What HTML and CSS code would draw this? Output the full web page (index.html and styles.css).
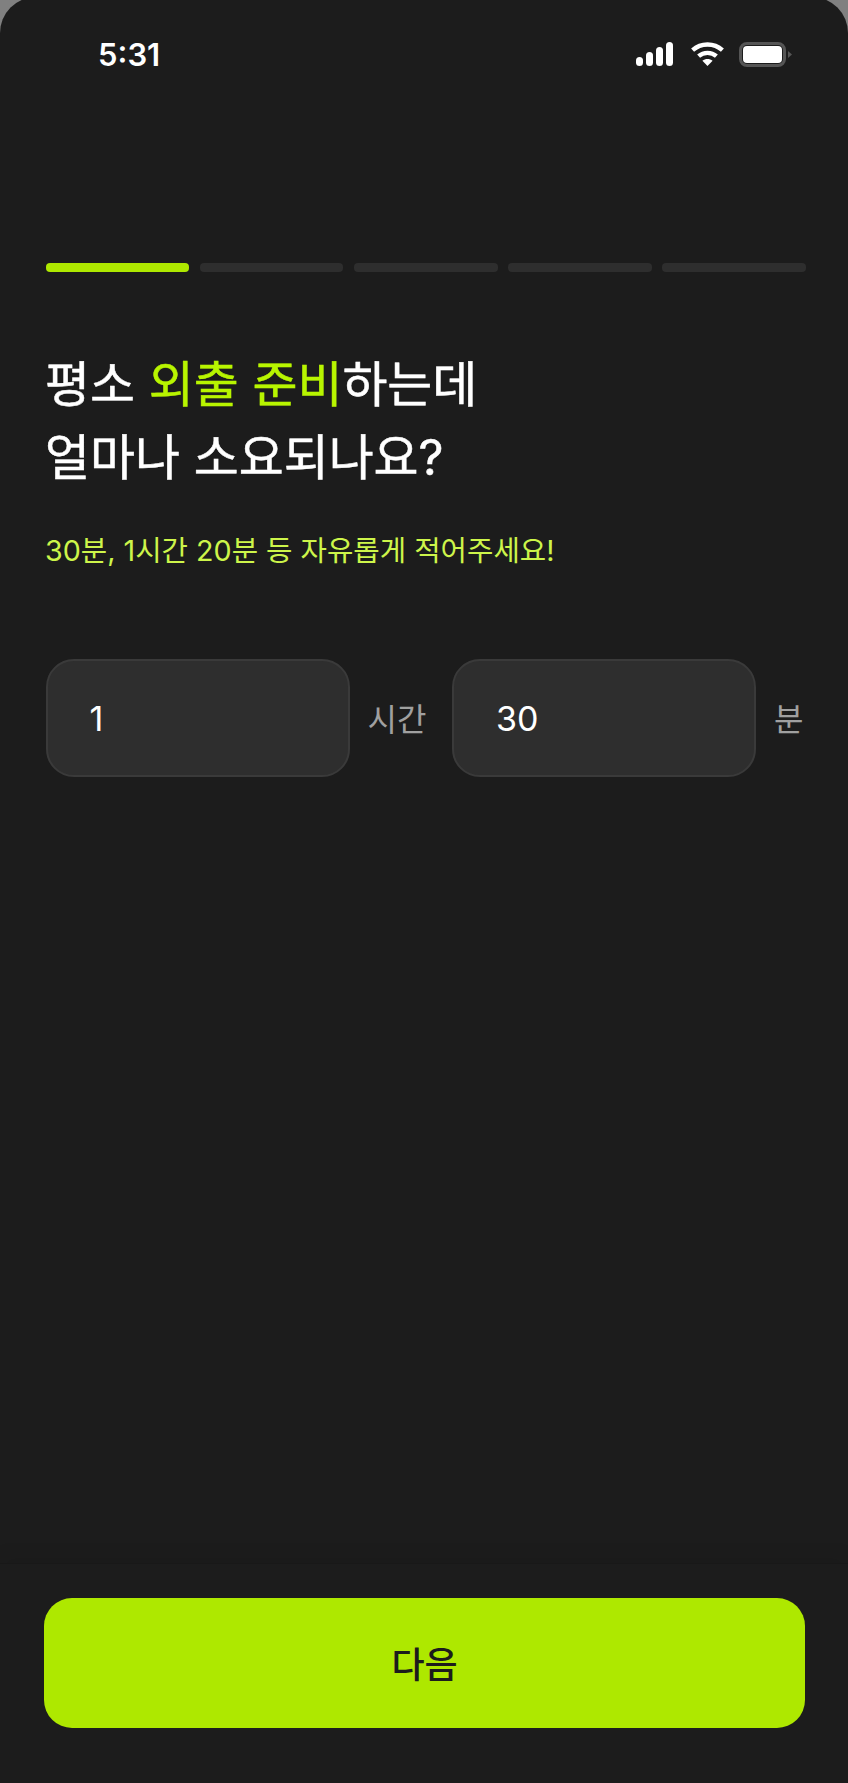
FILE: index.html
```html
<!DOCTYPE html>
<html lang="ko">
<head>
    <meta charset="UTF-8">
    <meta name="viewport" content="width=device-width, initial-scale=1.0">
    <title>외출 준비 시간</title>
    <link rel="stylesheet" href="styles.css">
</head>
<body>
    <div class="screen">
        <!-- Status bar -->
        <div class="status-bar">
            <span class="status-time">5:31</span>
            <div class="status-icons">
                <svg class="icon-signal" width="37" height="24" viewBox="0 0 37 24" fill="#fff">
                    <rect x="0" y="15" width="7" height="9" rx="3.5"/>
                    <rect x="10" y="10" width="7" height="14" rx="3.5"/>
                    <rect x="20" y="5" width="7" height="19" rx="3.5"/>
                    <rect x="30" y="0" width="7" height="24" rx="3.5"/>
                </svg>
                <svg class="icon-wifi" width="33" height="24" viewBox="0 0 33 24" fill="none" stroke="#fff" stroke-width="4.4">
                    <path d="M1.6 8.2C10 0.6 23 0.6 31.4 8.2"/>
                    <path d="M7.6 14.2C12.6 9.8 20.4 9.8 25.4 14.2"/>
                    <path d="M16.5 24L11.4 18.8C14.4 16.4 18.6 16.4 21.6 18.8Z" fill="#fff" stroke="none"/>
                </svg>
                <svg class="icon-battery" width="53" height="25" viewBox="0 0 53 25">
                    <rect x="1.5" y="1.5" width="44" height="22" rx="6.5" fill="none" stroke="#555" stroke-width="3"/>
                    <rect x="4" y="4" width="39" height="17" rx="4" fill="#fff"/>
                    <path d="M49 9L53 12.5L49 16Z" fill="#555"/>
                </svg>
            </div>
        </div>

        <!-- Progress -->
        <div class="progress">
            <div class="progress-step active"></div>
            <div class="progress-step"></div>
            <div class="progress-step"></div>
            <div class="progress-step"></div>
            <div class="progress-step"></div>
        </div>

        <!-- Question -->
        <h1 class="title">평소 <span class="highlight">외출 준비</span>하는데<br>얼마나 소요되나요?</h1>
        <p class="hint">30분, 1시간 20분 등 자유롭게 적어주세요!</p>

        <!-- Time inputs -->
        <div class="time-row">
            <input class="time-input" type="text" value="1">
            <span class="time-unit">시간</span>
            <input class="time-input" type="text" value="30">
            <span class="time-unit">분</span>
        </div>

        <!-- Bottom button -->
        <div class="bottom-bar">
            <button class="next-button" type="button">다음</button>
        </div>
    </div>
</body>
</html>
```

FILE: styles.css
```css
/* General Reset */
body, html {
    margin: 0;
    padding: 0;
    height: 100%;
    background-color: #808080;
    font-family: "Inter", "Noto Sans CJK KR", sans-serif;
    overflow: hidden;
}

/* top edge of the rounded frame is cropped by the window */
.screen {
    display: flex;
    flex-direction: column;
    box-sizing: border-box;
    height: 1786px;
    margin-top: -3px;
    background: #1c1c1c;
    border-radius: 36px 36px 0 0;
    overflow: hidden;
}

/* Status bar */
.status-bar {
    display: flex;
    justify-content: space-between;
    align-items: center;
    height: 26px;
    padding: 44px 56px 0 98px;
}

.status-time {
    font-size: 31px;
    font-weight: 600;
    color: #fff;
}

.status-icons {
    display: flex;
    align-items: center;
}

.icon-wifi {
    margin-left: 18px;
}

.icon-battery {
    margin-left: 15px;
}

/* Progress */
.progress {
    display: flex;
    gap: 10.5px;
    margin: 196px 42px 0 45.5px;
}

.progress-step {
    flex: 1;
    height: 9px;
    background: #2e2e2e;
    border-radius: 4px;
}

.progress-step.active {
    background: #aee800;
}

/* Question */
.title {
    margin: 76px 45px 0;
    font-size: 48.9px;
    font-weight: 400;
    line-height: 73px;
    color: #fff;
    -webkit-text-stroke: 0.5px currentColor;
}

.highlight {
    color: #b8f500;
}

.hint {
    margin: 35px 45px 0;
    font-size: 28.7px;
    font-weight: 400;
    line-height: 44px;
    color: #cdf54a;
}

/* Time inputs */
.time-row {
    display: flex;
    align-items: center;
    margin: 86px 40px 0 45.5px;
}

.time-input {
    box-sizing: border-box;
    width: 304px;
    height: 118px;
    padding: 0 42px;
    background: #2e2e2e;
    border: 2px solid #3a3a3a;
    border-radius: 28px;
    outline: none;
    font-family: inherit;
    font-size: 34px;
    color: #fff;
}

.time-unit {
    margin: 0 25.5px 2px 18px;
    font-size: 32px;
    color: #a0a0a0;
}

.time-unit:last-child {
    margin-right: 0;
}

/* Bottom button */
.bottom-bar {
    margin-top: auto;
    height: 220px;
    box-sizing: border-box;
    padding: 34px 43px 0 44px;
    border-top: 1px solid #181818;
    box-shadow: 0 -10px 14px rgba(0, 0, 0, 0.05);
}

.next-button {
    display: block;
    width: 100%;
    height: 130px;
    padding: 0 0 3px;
    background: #aee800;
    border: none;
    border-radius: 28px;
    font-family: inherit;
    font-size: 36px;
    font-weight: 500;
    color: #1c1c1c;
}
```
